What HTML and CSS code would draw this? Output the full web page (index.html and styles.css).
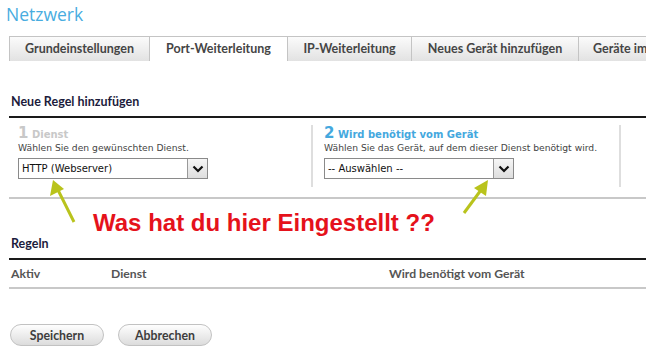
FILE: index.html
```html
<!DOCTYPE html>
<html lang="de">
<head>
<meta charset="utf-8">
<link rel="stylesheet" href="styles.css">
</head>
<body>
<div class="page">
  <h1 class="title">Netzwerk</h1>
  <div class="tabs">
    <div class="tab t1">Grundeinstellungen</div>
    <div class="tab t2 active">Port-Weiterleitung</div>
    <div class="tab t3">IP-Weiterleitung</div>
    <div class="tab t4">Neues Gerät hinzufügen</div>
    <div class="tab t5">Geräte im</div>
  </div>

  <h2 class="section">Neue Regel hinzufügen</h2>
  <div class="rule-line"></div>
  <div class="steps">
    <div class="step s1">
      <div class="step-head"><span class="num">1</span> Dienst</div>
      <div class="hint">Wählen Sie den gewünschten Dienst.</div>
      <div class="select"><span class="val">HTTP (Webserver)</span><span class="btn"><svg width="12" height="8" viewBox="0 0 12 8"><path d="M1.5 1.5 L6 6 L10.5 1.5" fill="none" stroke="#111" stroke-width="2.2"/></svg></span></div>
    </div>
    <div class="step s2">
      <div class="step-head blue"><span class="num">2</span> Wird benötigt vom Gerät</div>
      <div class="hint">Wählen Sie das Gerät, auf dem dieser Dienst benötigt wird.</div>
      <div class="select"><span class="val">-- Auswählen --</span><span class="btn"><svg width="12" height="8" viewBox="0 0 12 8"><path d="M1.5 1.5 L6 6 L10.5 1.5" fill="none" stroke="#111" stroke-width="2.2"/></svg></span></div>
    </div>
    <div class="step s3"></div>
  </div>
  <div class="gray-line"></div>

  <h2 class="section regeln">Regeln</h2>
  <div class="rule-line"></div>
  <div class="thead">
    <span class="c1">Aktiv</span>
    <span class="c2">Dienst</span>
    <span class="c3">Wird benötigt vom Gerät</span>
  </div>
  <div class="gray-line"></div>

  <div class="buttons">
    <button class="pill">Speichern</button>
    <button class="pill">Abbrechen</button>
  </div>

  <div class="annot">Was hat du hier Eingestellt ??</div>
  <svg class="arrows" width="646" height="362" viewBox="0 0 646 362">
    <line x1="74" y1="222" x2="58" y2="190" stroke="#b9c31c" stroke-width="3"/>
    <polygon points="53,180 50,196 64,189" fill="#b9c31c"/>
    <line x1="464" y1="213" x2="481" y2="190" stroke="#b9c31c" stroke-width="3"/>
    <polygon points="488,180 474,188 486,196" fill="#b9c31c"/>
  </svg>
</div>
</body>
</html>
```

FILE: styles.css
```css
html, body {
  margin: 0;
  padding: 0;
  background: #fff;
  width: 646px;
  height: 362px;
  overflow: hidden;
}
.page {
  position: relative;
  width: 646px;
  height: 362px;
  font-family: Lato, "Open Sans", sans-serif;
  color: #333;
}
.title {
  margin: 0;
  padding: 3px 0 0 6px;
  height: 33px;
  box-sizing: border-box;
  font-family: "Open Sans", sans-serif;
  font-weight: 400;
  font-size: 17.5px;
  line-height: 22px;
  color: #48acdf;
}
.tabs {
  display: flex;
  margin-left: 9px;
  margin-top: 3px;
  height: 25px;
  white-space: nowrap;
  overflow: hidden;
}
.tab {
  flex: none;
  box-sizing: border-box;
  height: 25px;
  border: 1px solid #c4c4c4;
  border-bottom: none;
  border-right: none;
  background: linear-gradient(#fbfbfb, #e2e2e2);
  font-weight: 700;
  font-size: 12.5px;
  line-height: 24px;
  color: #454545;
  text-align: center;
}
.tab.active { background: #fff; }
.t1 { width: 140px; }
.t2 { width: 138px; }
.t3 { width: 124px; }
.t4 { width: 167px; }
.t5 { width: 68px; text-align: left; padding-left: 14px; overflow: hidden; }

.section {
  margin: 0;
  padding-left: 11px;
  font-size: 12.5px;
  font-weight: 700;
  color: #1c1c3c;
  line-height: 14px;
  margin-top: 34px;
}
.rule-line {
  margin-left: 9px;
  margin-top: 7px;
  height: 2px;
  background: #1a1a1a;
}
.steps {
  display: flex;
  height: 79px;
  box-sizing: border-box;
  padding-top: 7px;
}
.step {
  box-sizing: border-box;
  height: 62px;
}
.s1 { width: 313px; padding-left: 18px; border-right: 2px solid #dedede; }
.s2 { width: 308px; padding-left: 11px; border-right: 2px solid #dedede; }
.s3 { flex: 1; }
.step-head {
  font-family: "DejaVu Sans", sans-serif;
  font-size: 10px;
  font-weight: 700;
  color: #c8c8c8;
  line-height: 17px;
  height: 17px;
}
.step-head .num { font-size: 15px; }
.step-head.blue { color: #44a8de; }
.hint {
  font-family: "DejaVu Sans", sans-serif;
  font-size: 9.2px;
  color: #444;
  line-height: 12px;
  height: 14px;
}
.select {
  display: flex;
  width: 190px;
  height: 21px;
  box-sizing: border-box;
  border: 1px solid #8a8a8a;
  margin-top: 2px;
  background: #fff;
}
.select .val {
  flex: 1;
  font-family: "DejaVu Sans", sans-serif;
  font-size: 10px;
  line-height: 19px;
  padding-left: 3px;
  color: #111;
}
.select .btn {
  width: 19px;
  border-left: 1px solid #999;
  background: linear-gradient(#f6f6f6, #dedede);
  display: flex;
  align-items: center;
  justify-content: center;
}
.gray-line {
  margin-left: 9px;
  height: 2px;
  background: #c8c8c8;
}
.section.regeln { margin-top: 38px; }
.thead {
  display: flex;
  height: 27px;
  font-size: 12.2px;
  font-weight: 700;
  color: #555;
  line-height: 28px;
}
.thead .c1 { width: 100px; padding-left: 11px; }
.thead .c2 { width: 278px; }
.buttons {
  display: flex;
  gap: 14px;
  padding-left: 10px;
  margin-top: 35px;
}
.pill {
  width: 94px;
  height: 22px;
  border: 1px solid #c2c2c2;
  border-radius: 11px;
  background: linear-gradient(#fefefe, #dcdcdc);
  font-family: Lato, sans-serif;
  font-weight: 700;
  font-size: 12.3px;
  color: #3d3d3d;
  padding: 0;
}
.annot {
  position: absolute;
  left: 93px;
  top: 209px;
  font-family: "Liberation Sans", Arial, sans-serif;
  font-weight: 700;
  font-size: 24px;
  color: #e5121b;
  white-space: nowrap;
}
.arrows {
  position: absolute;
  left: 0;
  top: 0;
  pointer-events: none;
}
```
